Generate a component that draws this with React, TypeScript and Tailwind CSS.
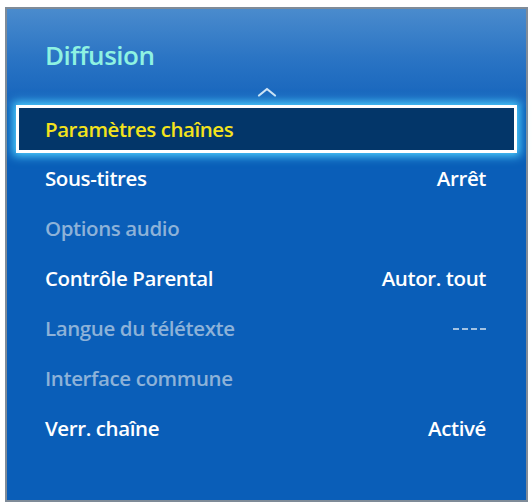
import React from 'react'

type Row = { label: string; value?: string; disabled?: boolean }

const rows: Row[] = [
  { label: 'Sous-titres', value: 'Arrêt' },
  { label: 'Options audio', disabled: true },
  { label: 'Contrôle Parental', value: 'Autor. tout' },
  { label: 'Langue du télétexte', value: '----', disabled: true },
  { label: 'Interface commune', disabled: true },
  { label: 'Verr. chaîne', value: 'Activé' },
]

export default function App() {
  return (
    <div className="w-[532px] h-[503px] bg-white pt-[7px] pl-[5px] font-['Open_Sans',sans-serif]">
      <div className="w-[523px] h-[495px] border-2 border-[#7f8b98] bg-[#0a5eb8] bg-[linear-gradient(to_bottom,#4a8bcd_0px,#2a74c4_50px,#1564bc_95px,#0a5eb8_100px)] flex flex-col">
        <div className="h-[70px] pl-[38px] pt-[30px]">
          <h1 className="text-[26px] leading-[32px] font-semibold text-[#8ef2e2] tracking-[-0.5px]">Diffusion</h1>
        </div>
        <div className="h-[26px] flex justify-center items-start pt-[8px]">
          <svg width="20" height="10" viewBox="0 0 20 10" className="text-[#cfe3f5]">
            <path d="M2 8.5 L10 2 L18 8.5" fill="none" stroke="currentColor" strokeWidth="2.2" strokeLinecap="round" strokeLinejoin="round" />
          </svg>
        </div>
        <div className="mx-[9px] h-[48px] border-[3px] border-white bg-[#033669] shadow-[0_0_9px_3px_#4fd2ff] flex items-center pl-[26px]">
          <span className="text-[20.5px] font-semibold text-[#f4e31c] tracking-[-0.45px]">Paramètres chaînes</span>
        </div>
        <ul className="flex flex-col">
          {rows.map((r) => (
            <li
              key={r.label}
              className={`h-[50px] flex items-center justify-between pl-[38px] pr-[40px] text-[20.5px] font-semibold tracking-[-0.4px] ${
                r.disabled ? 'text-[#8db2d8]' : 'text-white'
              }`}
            >
              <span>{r.label}</span>
              {r.value === '----' ? (
                <span className="flex gap-[3px] pt-[2px]">
                  <span className="w-[6px] h-[2px] bg-[#a3c2e2]" />
                  <span className="w-[6px] h-[2px] bg-[#a3c2e2]" />
                  <span className="w-[6px] h-[2px] bg-[#a3c2e2]" />
                  <span className="w-[6px] h-[2px] bg-[#a3c2e2]" />
                </span>
              ) : (
                r.value && <span>{r.value}</span>
              )}
            </li>
          ))}
        </ul>
      </div>
    </div>
  )
}
